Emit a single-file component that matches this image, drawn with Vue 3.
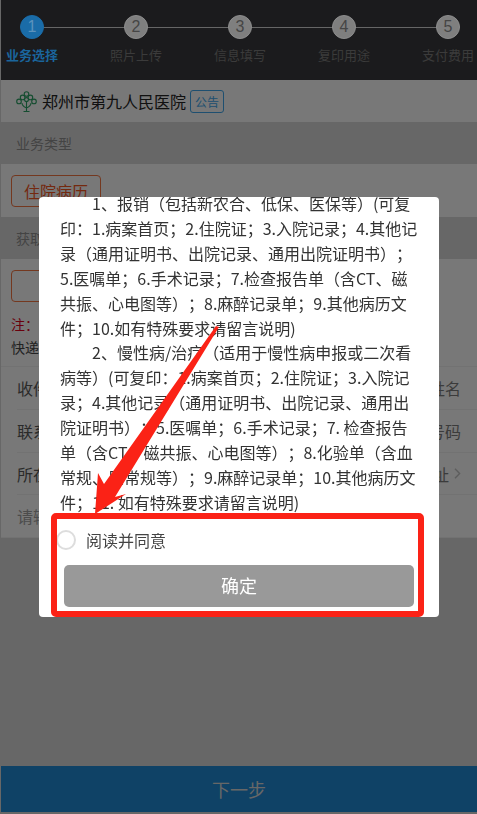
<script setup>
const steps = [
  { no: 1, label: '业务选择', active: true },
  { no: 2, label: '照片上传' },
  { no: 3, label: '信息填写' },
  { no: 4, label: '复印用途' },
  { no: 5, label: '支付费用' },
]

const fields = [
  { name: '收件人', hint: '请输入收件人姓名' },
  { name: '联系电话', hint: '请输入手机号码' },
  { name: '所在地区', hint: '请选择地址', link: true },
]

const lines = [
  { text: '1、报销（包括新农合、低保、医保等）(可复', indent: true },
  { text: '印：1.病案首页；2.住院证；3.入院记录；4.其他记' },
  { text: '录（通用证明书、出院记录、通用出院证明书）；' },
  { text: '5.医嘱单；6.手术记录；7.检查报告单（含CT、磁' },
  { text: '共振、心电图等）；8.麻醉记录单；9.其他病历文' },
  { text: '件；10.如有特殊要求请留言说明)' },
  { text: '2、慢性病/治疗（适用于慢性病申报或二次看', indent: true },
  { text: '病等）(可复印：1.病案首页；2.住院证；3.入院记' },
  { text: '录；4.其他记录（通用证明书、出院记录、通用出' },
  { text: '院证明书）；5.医嘱单；6.手术记录；7. 检查报告' },
  { text: '单（含CT、磁共振、心电图等）；8.化验单（含血' },
  { text: '常规、尿常规等）；9.麻醉记录单；10.其他病历文' },
  { text: '件；11. 如有特殊要求请留言说明)' },
]
</script>

<template>
  <div class="page">
    <header class="steps">
      <div class="steps__line"></div>
      <div
        v-for="s in steps"
        :key="s.no"
        class="step"
        :class="{ 'step--active': s.active }"
      >
        <span class="step__dot">{{ s.no }}</span>
        <span class="step__label">{{ s.label }}</span>
      </div>
    </header>

    <div class="hospital">
      <svg class="hospital__logo" viewBox="0 0 21 21" width="21" height="21" fill="none" stroke="#2a9a60" stroke-width="1.1">
        <circle cx="10.5" cy="3" r="2.3" />
        <circle cx="6.6" cy="6.4" r="2.3" />
        <circle cx="14.4" cy="6.4" r="2.3" />
        <circle cx="3" cy="10.4" r="2.3" />
        <circle cx="10.5" cy="8.6" r="2" />
        <circle cx="18" cy="10.4" r="2.3" />
        <path d="M10.5 11v10M6 12c0 3 2.4 4 4.5 5M15 12c0 3-2.4 4-4.5 5M7.5 20.5h6" />
      </svg>
      <span class="hospital__name">郑州市第九人民医院</span>
      <span class="hospital__notice">公告</span>
    </div>

    <div class="section-title">业务类型</div>
    <div class="choice-row">
      <span class="choice">住院病历<i class="choice__corner"></i></span>
    </div>

    <div class="section-title">获取方式</div>
    <div class="delivery">
      <span class="choice choice--wide"></span>
      <p class="delivery__note"><b>注：</b>请仔细填写收件信息</p>
      <p class="delivery__text">快递邮寄，运费到付</p>
    </div>

    <div class="form">
      <div v-for="f in fields" :key="f.name" class="form__row">
        <span class="form__name">{{ f.name }}</span>
        <span class="form__hint">{{ f.hint }}<svg v-if="f.link" class="form__chev" viewBox="0 0 7 11" width="7" height="11" fill="none" stroke="#bbb" stroke-width="1.4"><path d="M1 .8l4.6 4.7L1 10.2" /></svg></span>
      </div>
      <div class="form__row form__row--plain">请输入详细地址</div>
    </div>

    <footer class="next">下一步</footer>
  </div>

  <div class="mask">
    <div class="dialog">
      <div class="dialog__scroll">
        <div class="dialog__text">
          <div
            v-for="(l, i) in lines"
            :key="i"
            class="dialog__line"
            :class="{ 'dialog__line--indent': l.indent }"
          >{{ l.text }}</div>
        </div>
      </div>
      <div class="agree">
        <span class="agree__radio"></span>
        <span class="agree__label">阅读并同意</span>
      </div>
      <div class="confirm">确定</div>
    </div>
  </div>

  <div class="mark"></div>
  <svg class="arrow" viewBox="0 0 477 814" width="477" height="814">
    <polygon points="95,514 98,473 104,484 216,326 219,327 115,497 126,494" fill="#fb2216" />
  </svg>
</template>

<style>
html, body {
  margin: 0;
  background: #cfcfcf;
}
</style>

<style scoped>
* {
  box-sizing: border-box;
}

.page {
  position: relative;
  height: 812px;
  margin-left: 1px;
  background: #cfcfcf;
  font-family: "Noto Sans CJK SC", "Liberation Sans", sans-serif;
  color: #333;
  display: flex;
  flex-direction: column;
  text-spacing-trim: space-all;
}

/* sits above the mask, so these are the already dimmed colours */
.steps {
  position: relative;
  z-index: 1;
  height: 80px;
  background: #1b1b1d;
  display: flex;
  justify-content: space-between;
  padding: 15px 3px 0 5px;
}

.steps__line {
  position: absolute;
  left: 33px;
  right: 28px;
  top: 27px;
  height: 1px;
  background: #666;
}

.step {
  position: relative;
  width: 52px;
  display: flex;
  flex-direction: column;
  align-items: center;
  gap: 7px;
}

.step__dot {
  width: 24px;
  height: 24px;
  border-radius: 50%;
  background: #7f7f7f;
  border: 1px solid #8c8c8c;
  color: #454545;
  font: 16px/22px "Liberation Sans", sans-serif;
  text-align: center;
}

.step__label {
  font-size: 13px;
  line-height: 18px;
  white-space: nowrap;
  color: #3b3b3b;
}

.step--active .step__dot {
  background: #1a6ca8;
  border-color: #1a6ca8;
  color: #5b93bd;
}

.step--active .step__label {
  color: #1a659c;
  font-weight: 700;
}

.hospital {
  height: 42px;
  background: #f0f0f0;
  display: flex;
  align-items: center;
  padding-left: 15px;
  flex: none;
}

.hospital__logo {
  margin-right: 5px;
}

.hospital__name {
  font-size: 16px;
  color: #222;
}

.hospital__notice {
  margin-left: 4px;
  width: 34px;
  height: 23px;
  border: 1px solid #3d9fe0;
  border-radius: 3px;
  color: #3d9fe0;
  font-size: 12px;
  line-height: 21px;
  text-align: center;
}

.section-title {
  height: 42px;
  flex: none;
  background: #cfcfcf;
  padding-left: 15px;
  font-size: 14px;
  line-height: 42px;
  color: #888;
}

.choice-row {
  height: 53px;
  flex: none;
  background: #f0f0f0;
  padding: 11px 0 0 10px;
}

.choice {
  position: relative;
  display: block;
  width: 90px;
  height: 32px;
  border: 1px solid #e8703f;
  border-radius: 4px;
  color: #e8531f;
  font-size: 16px;
  line-height: 30px;
  text-align: center;
  background: #f0f0f0;
}

.choice__corner {
  position: absolute;
  right: 0;
  bottom: 0;
  border-style: solid;
  border-width: 0 0 8px 8px;
  border-color: transparent transparent #e8531f transparent;
}

.delivery {
  height: 108px;
  flex: none;
  background: #f0f0f0;
  padding: 11px 0 0 10px;
  border-bottom: 1px solid #e4e4e4;
}

.choice--wide {
  border-color: #e8703f;
}

.delivery__note {
  margin: 12px 0 0;
  font-size: 14px;
  line-height: 20px;
  color: #333;
}

.delivery__note b {
  color: #d4001a;
  font-weight: 400;
}

.delivery__text {
  margin: 3px 0 0;
  font-size: 14px;
  line-height: 20px;
  color: #444;
}

.form {
  background: #f0f0f0;
  padding-left: 16px;
  flex: none;
  border-bottom: 1px solid #e4e4e4;
}

.form__row {
  height: 43px;
  display: flex;
  align-items: center;
  justify-content: space-between;
  padding-right: 16px;
  font-size: 16px;
  border-bottom: 1px solid #e4e4e4;
}

.form__row:nth-child(3) {
  height: 42px;
}

.form__row--plain {
  height: 42px;
  border-bottom: 0;
  color: #999;
}

.form__name {
  color: #555;
}

.form__hint {
  display: flex;
  align-items: center;
  gap: 5px;
  color: #777;
}

.next {
  margin-top: auto;
  height: 46px;
  flex: none;
  background: #1f85cc;
  color: #cfcfcf;
  font-size: 18px;
  line-height: 46px;
  text-align: center;
}

.mask {
  position: fixed;
  inset: 0;
  background: rgba(0, 0, 0, 0.5);
  font-family: "Noto Sans CJK SC", "Liberation Sans", sans-serif;
  text-spacing-trim: space-all;
}

.dialog {
  position: absolute;
  left: 39px;
  top: 197px;
  width: 400px;
  height: 420px;
  background: #fff;
  border-radius: 4px;
  overflow: hidden;
}

.dialog__scroll {
  height: 320px;
  overflow: hidden;
  padding: 0 21px;
}

.dialog__text {
  margin-top: -6px;
  font-size: 16px;
  line-height: 24.9px;
  color: #333;
}

.dialog__line {
  white-space: nowrap;
}

.dialog__line--indent {
  text-indent: 32px;
}

.agree {
  display: flex;
  align-items: center;
  height: 26px;
  margin-top: 10px;
  padding-left: 17px;
}

.agree__radio {
  width: 20px;
  height: 20px;
  border: 2px solid #ddd;
  border-radius: 50%;
}

.agree__label {
  margin-left: 10px;
  font-size: 16px;
  color: #444;
}

.confirm {
  width: 350px;
  height: 42px;
  margin: 12px 0 0 25px;
  background: #999;
  border-radius: 5px;
  color: #fff;
  font-size: 18px;
  line-height: 40px;
  text-align: center;
}

.mark {
  position: fixed;
  left: 51px;
  top: 513px;
  width: 373px;
  height: 104px;
  border: 6px solid #fb2216;
  border-radius: 5px;
}

.arrow {
  position: fixed;
  left: 0;
  top: 0;
  pointer-events: none;
}
</style>
